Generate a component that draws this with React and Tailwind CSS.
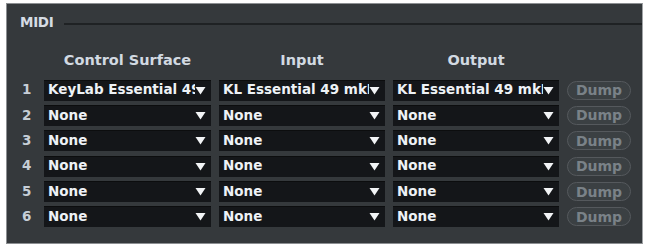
import React from "react";

const rows = [
  ["KeyLab Essential 49", "KL Essential 49 mkII", "KL Essential 49 mkII"],
  ["None", "None", "None"],
  ["None", "None", "None"],
  ["None", "None", "None"],
  ["None", "None", "None"],
  ["None", "None", "None"],
];

function Tri() {
  return (
    <svg width="11" height="9" viewBox="0 0 11 9" className="shrink-0">
      <path d="M0.5 1 L10.5 1 L5.5 8.5 Z" fill="#f2f4f6" />
    </svg>
  );
}

function Drop({ text }) {
  return (
    <div className="h-[21px] bg-[#141619] flex items-center pl-[4px] pr-[5px] shadow-[inset_0_1px_0_#0c0d0e]">
      <span className="flex-1 overflow-hidden whitespace-nowrap text-[13.5px] font-bold text-[#eef2f6] leading-none">
        {text}
      </span>
      <Tri />
    </div>
  );
}

export default function App() {
  return (
    <div className="w-[648px] h-[250px] bg-white pt-[3px] pl-[6px]" style={{ fontFamily: '"DejaVu Sans", "Noto Sans", sans-serif' }}>
      <div className="w-[637px] h-[241px] bg-[#35393c] border border-[#8c8f92] border-r-[#a0a3a6] flex flex-col">
        <div className="flex items-center h-[31px] pl-[13px] pt-[7px]">
          <span className="text-[13.5px] font-bold text-[#d6dce4] leading-none tracking-[-0.3px]">MIDI</span>
          <div className="flex-1 ml-[10px] h-[2px] bg-[#1f2224] mt-[2px]" />
        </div>
        <div className="grid grid-cols-[22px_167px_166px_166px_64px] gap-x-[8px] pl-[7px] mt-[18px]">
          <div />
          <div className="text-center text-[14.5px] font-bold text-[#d2dae2] leading-none">Control Surface</div>
          <div className="text-center text-[14.5px] font-bold text-[#d2dae2] leading-none">Input</div>
          <div className="text-center text-[14.5px] font-bold text-[#d2dae2] leading-none">Output</div>
          <div />
        </div>
        <div className="flex flex-col mt-[12px] pl-[7px]">
          {rows.map((r, i) => (
            <div key={i} className="grid grid-cols-[22px_167px_166px_166px_64px] gap-x-[8px] h-[25.4px] items-start">
              <div className="h-[21px] flex items-center pl-[8px] text-[13.5px] font-bold text-[#c6ced6] leading-none">{i + 1}</div>
              <Drop text={r[0]} />
              <Drop text={r[1]} />
              <Drop text={r[2]} />
              <div className="h-[19px] mt-[1px] rounded-full bg-[#3b4043] border border-[#55595d] flex items-center justify-center text-[14px] font-bold text-[#7a8288] leading-none">
                Dump
              </div>
            </div>
          ))}
        </div>
      </div>
    </div>
  );
}
